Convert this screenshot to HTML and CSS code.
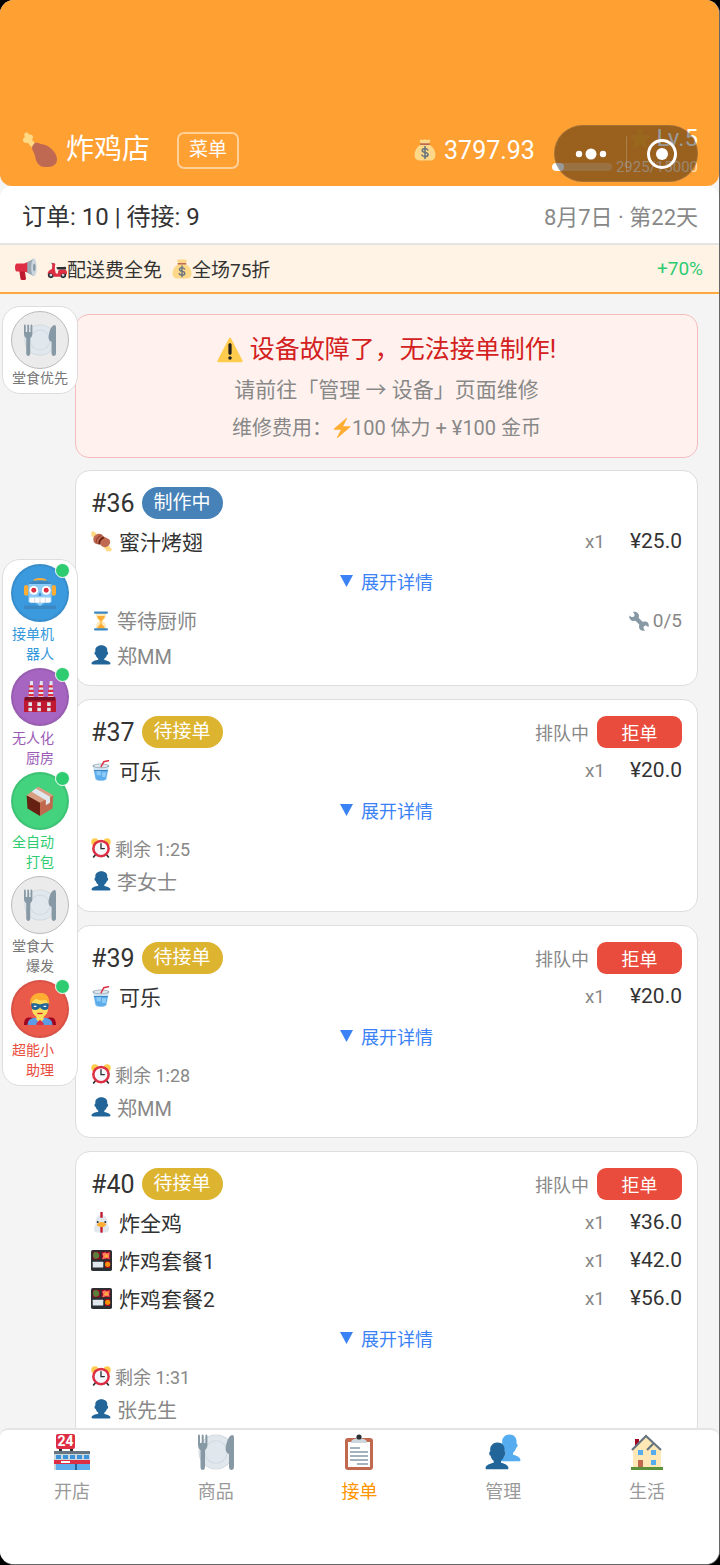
FILE: index.html
```html
<!DOCTYPE html>
<html lang="zh-CN">
<head>
<meta charset="utf-8">
<meta name="viewport" content="width=device-width, initial-scale=1">
<title>炸鸡店</title>
<link rel="stylesheet" href="styles.css">
</head>
<body>
<svg class="sprite" aria-hidden="true">
  <symbol id="i-leg" viewBox="0 0 36 36">
    <path fill="#FFD983" d="M3 1C5 0 7 1 7 3c2-1 4 0 4 2s-1 2-1 3l6 6-4 4-6-7c-2 0-5 0-5-3 0-2 1-2 2-3-1-1-1-3 0-4z"/>
    <path fill="#BF6952" d="M12 12c1-2 4-1 7 0 7 1 12 5 15 11 3 7-1 12-9 12-8 1-11-5-12-11-1-4-3-6-3-8 0-2 1-3 2-4z"/>
  </symbol>
  <symbol id="i-bag" viewBox="0 0 36 36">
    <path fill="#FDD888" d="M12 9C5 12 1 19 1 26c0 7 4 9 10 9h14c6 0 10-2 10-9 0-7-4-14-11-17z"/>
    <path fill="#FDD888" d="M11 1c2 1 4 0 7 0s5 1 7 0c2 0 2 2 1 4l-3 5H13l-3-5c-1-2-1-4 1-4z"/>
    <rect x="10" y="7" width="16" height="3" rx="1.500" fill="#BF6952"/>
    <path fill="none" stroke="#67757F" stroke-width="2.600" stroke-linecap="round" d="M22.500 18c-1-2-3-2.500-4.500-2.500-3 0-4.500 1.500-4.500 3.200 0 4.600 9.500 2.200 9.500 6.800 0 2-2 3.500-5 3.500-2.500 0-4-.8-5-2.800M18 12.500v19.500"/>
  </symbol>
  <symbol id="i-star" viewBox="0 0 36 36">
    <path fill="#FFAC33" d="M27.287 34.627c-.404 0-.806-.124-1.152-.371L18 28.422l-8.135 5.834a1.970 1.970 0 0 1-2.312-.008 1.971 1.971 0 0 1-.721-2.194l3.034-9.792-8.062-5.681a1.980 1.980 0 0 1-.708-2.203 1.978 1.978 0 0 1 1.866-1.363L12.947 13l3.179-9.549a1.976 1.976 0 0 1 3.749 0L23 13l10.036.015a1.975 1.975 0 0 1 1.159 3.566l-8.062 5.681 3.034 9.792a1.970 1.970 0 0 1-.72 2.194 1.957 1.957 0 0 1-1.160.379z"/>
  </symbol>
  <symbol id="i-horn" viewBox="0 0 36 36">
    <path fill="#BE1931" d="M7 21h9l2 13c0 1-1 2-2 2h-5c-1 0-2-1-2-2z"/>
    <path fill="#DD2E44" d="M3 9h12L27 4v22l-12-4H3c-2 0-3-3-3-6.500S1 9 3 9z"/>
    <path fill="#99AAB5" d="M20 7l11-6c2 3 2 25 0 29l-11-6z"/>
    <ellipse cx="31" cy="15.500" rx="4.500" ry="14.500" fill="#CCD6DD"/>
    <ellipse cx="31.500" cy="15.500" rx="2" ry="6" fill="#8899A6"/>
  </symbol>
  <symbol id="i-moto" viewBox="0 0 36 36">
    <path fill="none" stroke="#66757F" stroke-width="2" d="M7 29L12 9 8 7"/>
    <circle cx="7" cy="29" r="5.500" fill="#292F33"/><circle cx="29" cy="29" r="5.500" fill="#292F33"/>
    <circle cx="7" cy="29" r="2.500" fill="#CCD6DD"/><circle cx="29" cy="29" r="2.500" fill="#CCD6DD"/>
    <path fill="#DD2E44" d="M10 10c4-1 5 3 4 8l2 8h4c-1-4 1-7 4-7h9c3 2 4 7 2 9-6-4-10-1-11 4H12c-1-5-6-8-11-5 0-5 4-7 8-9z"/>
    <path fill="#292F33" d="M17 15c5-1 11 0 16-1 2 0 2 5 0 5H20c-2 0-3-2-3-4z"/>
    <circle cx="12" cy="10" r="3" fill="#DD2E44"/>
  </symbol>
  <symbol id="i-plate" viewBox="0 0 36 36">
    <circle cx="18" cy="18" r="17.500" fill="#CCD6DD"/><circle cx="18" cy="18" r="16.700" fill="#E1E8ED"/>
    <circle cx="18" cy="18" r="11.500" fill="#CCD6DD"/><circle cx="18" cy="18" r="10.700" fill="#E1E8ED"/>
    <path fill="#8899A6" d="M0 2c0-2 2-2 2 0v7h1.700V2c0-2 2-2 2 0v7h1.700V2c0-2 2-2 2 0v9c0 3-1.400 4-2.400 5v17c0 4-4.500 4-4.500 0V16C1.300 15 0 14 0 11z"/>
    <path fill="#8899A6" d="M34 1c2 0 2 2 2 4v28c0 4-5 4-5 0V20c-3-1-4-4-3-8 1-6 3-10 6-11z"/>
  </symbol>
  <symbol id="i-warn" viewBox="0 0 36 36">
    <path fill="#FFCC4D" d="M2.653 35C.811 35-.001 33.662.847 32.027L16.456 1.972c.849-1.635 2.238-1.635 3.087 0l15.609 30.056c.85 1.634.037 2.972-1.805 2.972H2.653z"/>
    <path fill="#231F20" d="M15.583 28.953a2.418 2.418 0 0 1 4.837 0 2.418 2.418 0 0 1-4.837 0zm.186-18.293c0-1.302.961-2.108 2.232-2.108 1.241 0 2.233.837 2.233 2.108v11.938c0 1.271-.992 2.108-2.233 2.108-1.271 0-2.232-.807-2.232-2.108z"/>
  </symbol>
  <symbol id="i-bolt" viewBox="0 0 36 36">
    <path fill="#FFAC33" d="M32.938 15.651C32.792 15.260 32.418 15 32 15H19.925L26.890 1.458c.219-.426.106-.947-.271-1.243C26.437.071 26.218 0 26 0c-.233 0-.466.082-.653.243L18 6.588 3.347 19.243c-.316.273-.43.714-.284 1.105S3.582 21 4 21h12.075L9.110 34.542c-.219.426-.106.947.271 1.243.182.144.401.215.619.215.233 0 .466-.082.653-.243L18 29.412l14.653-12.655c.317-.273.43-.714.285-1.106z"/>
  </symbol>
  <symbol id="i-meat" viewBox="0 0 36 36">
    <path fill="#FFD983" d="M2 1c2-1 4 0 4 2 3-1 4 1 3 3l20 20c2-1 5 0 4 3 2 0 3 2 2 4s-3 3-5 1c-1 2-4 2-4-1L4 10C1 10-1 8 1 5 0 4 0 2 2 1z"/>
    <path fill="#BF6952" d="M4 14c0-5 6-10 11-9 3 0 5 1 6 4l10 5c3 3 2 7 0 10-3 3-6 5-10 3-3-1-5-3-6-5-4 1-6 1-8-1-2-1-3-4-3-7z"/>
    <path fill="none" stroke="#662113" stroke-width="3" d="M14 23c0-5 3-10 8-12"/>
    <path fill="none" stroke="#9A4032" stroke-width="2" d="M9 20c-1-5 3-11 8-12"/>
  </symbol>
  <symbol id="i-glass" viewBox="0 0 36 36">
    <path fill="#FFE8B6" d="M9 4h18c0 8-2 11-6 14 4 3 6 6 6 14H9c0-8 2-11 6-14C11 15 9 12 9 4z"/>
    <path fill="#FFAC33" d="M11 9h14c-1 5-4 6-6 9v4c1 5 5 4 6 10H11c1-6 5-5 6-10v-4c-2-3-5-4-6-9z"/>
    <path fill="#3B88C3" d="M7 1h22c2 0 2 4 0 4H7C5 5 5 1 7 1zm0 30h22c2 0 2 4 0 4H7c-2 0-2-4 0-4z"/>
  </symbol>
  <symbol id="i-user" viewBox="0 0 36 36">
    <path fill="currentColor" d="M24 26.799v-2.566c2-1.348 4.080-3.779 4.703-6.896.186.103.206.17.413.17.991 0 1.709-1.287 1.709-2.873 0-1.562-.823-2.827-1.794-2.865.187-.674.293-1.577.293-2.735C29.324 5.168 26 .527 18.541.527c-6.629 0-10.777 4.641-10.777 8.507 0 1.123.069 2.043.188 2.755-.911.137-1.629 1.352-1.629 2.845 0 1.587.804 2.873 1.796 2.873.206 0 .025-.067.209-.17C8.952 20.453 11 22.885 13 24.232v2.414c-5 .645-12 3.437-12 6.230v1.061C1 35 2.076 35 3.137 35h29.725C33.924 35 35 35 35 33.938v-1.061c0-2.615-6-5.225-11-6.078z"/>
  </symbol>
  <symbol id="i-users" viewBox="0 0 36 36">
    <svg x="12" y="0" width="24" height="28" viewBox="0 0 36 36" preserveAspectRatio="none" color="#55ACEE"><use href="#i-user"/></svg>
    <svg x="0" y="8" width="24" height="28" viewBox="0 0 36 36" preserveAspectRatio="none" color="#226699"><use href="#i-user"/></svg>
  </symbol>
  <symbol id="i-wrench" viewBox="0 0 36 36">
    <path fill="#8899A6" d="M1 8c1 1 3 3 5 3s4-2 4-4-2-4-3-5c5-2 11 2 11 7 0 2-1 3 0 4l6 6c1 1 3 0 5 0 5 0 8 5 6 10-1-1-3-3-5-3s-4 2-4 4 2 4 3 5c-5 2-11-1-11-6 0-3 1-4 0-5l-6-6c-1-1-2 0-4 0-5 0-9-5-7-10z"/>
  </symbol>
  <symbol id="i-cup" viewBox="0 0 36 36">
    <path fill="#D4E7F5" d="M3 10h28l-4 23c0 2-4 3-10 3s-10-1-10-3z"/>
    <path fill="#5DADEC" d="M5 17h24l-3 15c-1 2-4 3-9 3s-8-1-9-3z"/>
    <path fill="#8CCAF7" d="M9 19h8v7h-7zm10 2h7l-1 8h-6z"/>
    <path fill="#3B88C3" d="M5 17h24v2H5z"/>
    <ellipse cx="17" cy="10" rx="14.500" ry="4" fill="#99AAB5"/><ellipse cx="17" cy="10" rx="12" ry="2.600" fill="#E1E8ED"/>
    <path fill="none" stroke="#DD2E44" stroke-width="2.600" d="M17 12l5-9 9-2"/>
  </symbol>
  <symbol id="i-clock" viewBox="0 0 36 36">
    <circle cx="7" cy="7" r="6.500" fill="#FFCC4D"/><circle cx="29" cy="7" r="6.500" fill="#FFCC4D"/>
    <path stroke="#292F33" stroke-width="3" d="M8 30l-4 5M28 30l4 5"/>
    <circle cx="18" cy="19" r="16" fill="#DD2E44"/><circle cx="18" cy="19" r="11.500" fill="#F5F8FA"/>
    <path fill="none" stroke="#292F33" stroke-width="2.400" stroke-linecap="round" d="M18 10v9h6"/>
  </symbol>
  <symbol id="i-hen" viewBox="0 0 36 36">
    <path fill="#E1E8ED" d="M18 5c-8 0-10 6-10 13 0 4-3 8-3 12 0 5 6 6 10 5l3-10 3 10c4 1 10 0 10-5 0-4-3-8-3-12 0-7-2-13-10-13z"/>
    <path fill="#BE1931" d="M16 0h4v10h-4zM16 24h4v11c-1 1-3 1-4 0z"/>
    <path fill="#FFAC33" d="M18 17c4 0 8 3 8 5s-5 4-8 4-8-2-8-4 4-5 8-5z"/>
    <circle cx="11.500" cy="17" r="1.700" fill="#292F33"/><circle cx="24.500" cy="17" r="1.700" fill="#292F33"/>
  </symbol>
  <symbol id="i-bento" viewBox="0 0 36 36">
    <rect width="36" height="36" rx="3" fill="#292F33"/>
    <path fill="#A0041E" d="M3 3h12v13H3zm15 0h15v13H18zM24 19h9v12h-9z"/>
    <path fill="#5C7F3B" d="M4 5c4-3 9-1 10 3s-2 7-6 7-5-5-4-10z"/>
    <path fill="#FF7862" d="M19 6l5-2 3 2 5-2-1 7 1 4-6-1-7 2 2-5z"/><path fill="#FFAC33" d="M22 11l5-5 3 6-4 1z"/>
    <rect x="3" y="20" width="18" height="10" rx="1" fill="#E1E8ED"/><circle cx="28.500" cy="24.500" r="4.500" fill="#F4900C"/>
  </symbol>
  <symbol id="i-robot" viewBox="0 0 36 36">
    <path fill="#FFAC33" d="M10 5c1-5 15-5 16 0v4H10z"/>
    <rect x="0" y="9" width="5" height="12" rx="2.500" fill="#FFAC33"/><rect x="31" y="9" width="5" height="12" rx="2.500" fill="#FFAC33"/>
    <path fill="#8CCAF7" d="M5 6c6-3 20-3 26 0v22H5z"/>
    <path fill="#3B88C3" d="M5 6c6-3 20-3 26 0v2H5zM0 32h36v4H0z"/>
    <path fill="#8CCAF7" d="M13 29h10l-5 4z"/>
    <circle cx="11" cy="15" r="5" fill="#fff"/><circle cx="25" cy="15" r="5" fill="#fff"/>
    <circle cx="11" cy="15" r="2.800" fill="#DD2E44"/><circle cx="25" cy="15" r="2.800" fill="#DD2E44"/>
    <path fill="#3B88C3" d="M16 21l2-4 2 4z"/><rect x="6" y="23" width="24" height="6" rx="1.500" fill="#fff"/>
    <path stroke="#CCD6DD" d="M12 23v6M18 23v6M24 23v6"/>
  </symbol>
  <symbol id="i-factory" viewBox="0 0 36 36">
    <path fill="#E1E8ED" d="M7 0h3l1 18H5zM18 0h3l1 18h-6zM29 0h3l1 18h-6z"/>
    <path stroke="#DD2E44" stroke-width="2.500" d="M5.500 6h5M5 11h6M5 16h6M16.500 6h5M16 11h6M16 16h6M27.500 6h5M27 11h6M27 16h6"/>
    <path fill="#BE1931" d="M1 18h34l1 3v14H0V21z"/><path fill="#7A1025" d="M1 18h34v4H1z"/>
    <path fill="#E1E8ED" d="M5 24h4v4H5zm10 0h4v4h-4zm11 0h4v4h-4zM5 30h4v4H5zm10 0h4v4h-4zm11 0h4v4h-4z"/>
  </symbol>
  <symbol id="i-box" viewBox="0 0 36 36">
    <path fill="#662113" d="M2 11l16 8v17L3 27z"/><path fill="#C1694F" d="M18 19l16-8-1 16-15 9z"/>
    <path fill="#D99E82" d="M2 11L16 1l18 10-16 9z"/><path fill="#E1E8ED" d="M8 7l5-4 17 10v7l-5 3v-6z"/>
  </symbol>
  <symbol id="i-hero" viewBox="0 0 36 36">
    <path fill="#A0041E" d="M0 36c0-8 4-9 9-8h18c5-1 9 0 9 8z"/>
    <path fill="#5C9BE6" d="M4 36c0-6 4-8 9-8h10c5 0 9 2 9 8z"/>
    <path fill="#FFDC5D" d="M9 9c0-5 18-5 18 0v9c0 5-3 7-5 9v3l-4 3-4-3v-3c-2-2-5-4-5-9z"/>
    <path fill="#FFAC33" d="M7 14C6 6 9 1 17 0c8-1 13 5 11 14l-3-6c-6 1-9 0-12-2-1 3-3 3-4 4z"/>
    <path fill="#226699" d="M8 12c4-1 7 0 10 1 3-1 6-2 10-1l-1 6c-4 2-7 1-9-2-2 3-5 4-9 2z"/>
    <path stroke="#fff" stroke-width="1.500" d="M11 15h3M22 15h3"/><path stroke="#DF1F32" stroke-width="1.500" d="M15 23h6"/>
    <path fill="#DD2E44" d="M14 34l4-4 4 4v2h-8z"/>
  </symbol>
  <symbol id="i-clip" viewBox="0 0 36 36">
    <rect x="4" y="4" width="28" height="32" rx="3" fill="#C1694F"/><path fill="#fff" d="M7 8h22v25H7z"/>
    <path fill="#CCD6DD" d="M10 9c0-3 2-4 4-4s2-3 4-3 2 3 4 3 4 1 4 4z"/><circle cx="18" cy="3" r="2.600" fill="#292F33"/>
    <path stroke="#8899A6" stroke-width="1.600" d="M9 14h10M9 18h18M9 22h18M9 26h18M16 30h11"/>
  </symbol>
  <symbol id="i-house" viewBox="0 0 36 36">
    <path fill="#A0041E" d="M6 5h4v10H6z"/><path fill="#5C913B" d="M2 33h32v3H2z"/>
    <path fill="#FFE8B6" d="M4 16L17 3l15 13v17H4z"/>
    <path fill="none" stroke="#66757F" stroke-width="2.200" d="M3 16L17 2l15 14M18 16l7-7"/>
    <path fill="#55ACEE" d="M9 16h5v5H9zm13 0h5v5h-5zm0 10h5v5h-5z"/><path fill="#C1694F" d="M9 26h5v7H9z"/>
  </symbol>
</svg>

<div class="app">
  <header class="header">
    <svg class="icon-36" aria-hidden="true"><use href="#i-leg"/></svg>
    <h1 class="shop">炸鸡店</h1>
    <button class="menu-btn" type="button">菜单</button>
    <div class="money"><svg class="icon-22" aria-hidden="true"><use href="#i-bag"/></svg><span>3797.93</span></div>
    <div class="level">
      <div class="level-name"><svg class="icon-22" aria-hidden="true"><use href="#i-star"/></svg><span>Lv.5</span></div>
      <div class="level-xp"><div class="bar"><div class="bar-fill" style="width:19.5%"></div></div><span>2925/15000</span></div>
    </div>
    <div class="capsule">
      <button type="button" aria-label="更多"><svg width="32" height="12" viewBox="0 0 32 12"><g fill="#fff"><circle cx="4" cy="6" r="3.200"/><circle cx="16" cy="6" r="5.500"/><circle cx="28" cy="6" r="3.200"/></g></svg></button>
      <button type="button" aria-label="关闭"><svg width="32" height="32" viewBox="0 0 32 32"><circle cx="16" cy="16" r="13.500" fill="none" stroke="#fff" stroke-width="3"/><circle cx="16" cy="16" r="6" fill="#fff"/></svg></button>
    </div>
  </header>

  <div class="status"><span>订单: 10 | 待接: 9</span><span class="date">8月7日 · 第22天</span></div>

  <div class="promo">
    <svg class="icon-22" aria-hidden="true"><use href="#i-horn"/></svg>
    <span class="deal"><svg class="icon-20" aria-hidden="true"><use href="#i-moto"/></svg>配送费全免</span>
    <span class="deal"><svg class="icon-20" aria-hidden="true"><use href="#i-bag"/></svg>全场75折</span>
    <span class="boost">+70%</span>
  </div>

  <main class="main">
    <section class="alert">
      <h2><svg class="icon-26" aria-hidden="true"><use href="#i-warn"/></svg>设备故障了，无法接单制作!</h2>
      <p class="alert-go">请前往「管理 → 设备」页面维修</p>
      <p class="alert-cost">维修费用：<svg class="icon-20" aria-hidden="true"><use href="#i-bolt"/></svg>100 体力 + ¥100 金币</p>
    </section>

    <article class="card">
      <div class="card-head"><h3>#36</h3><span class="pill pill-blue">制作中</span></div>
      <div class="item"><svg class="icon-21" aria-hidden="true"><use href="#i-meat"/></svg><span>蜜汁烤翅</span><span class="qty">x1</span><span class="price">¥25.0</span></div>
      <button class="expand" type="button"><i class="tri"></i>展开详情</button>
      <div class="cook"><svg class="icon-20" aria-hidden="true"><use href="#i-glass"/></svg><span>等待厨师</span><span class="progress"><svg class="icon-20" aria-hidden="true"><use href="#i-wrench"/></svg>0/5</span></div>
      <div class="customer"><svg class="icon-20" aria-hidden="true"><use href="#i-user"/></svg><span>郑MM</span></div>
    </article>

    <article class="card">
      <div class="card-head"><h3>#37</h3><span class="pill">待接单</span><span class="queue">排队中</span><button class="reject" type="button">拒单</button></div>
      <div class="item"><svg class="icon-21" aria-hidden="true"><use href="#i-cup"/></svg><span>可乐</span><span class="qty">x1</span><span class="price">¥20.0</span></div>
      <button class="expand" type="button"><i class="tri"></i>展开详情</button>
      <div class="timer"><svg class="icon-20" aria-hidden="true"><use href="#i-clock"/></svg><span>剩余 1:25</span></div>
      <div class="customer"><svg class="icon-20" aria-hidden="true"><use href="#i-user"/></svg><span>李女士</span></div>
    </article>

    <article class="card">
      <div class="card-head"><h3>#39</h3><span class="pill">待接单</span><span class="queue">排队中</span><button class="reject" type="button">拒单</button></div>
      <div class="item"><svg class="icon-21" aria-hidden="true"><use href="#i-cup"/></svg><span>可乐</span><span class="qty">x1</span><span class="price">¥20.0</span></div>
      <button class="expand" type="button"><i class="tri"></i>展开详情</button>
      <div class="timer"><svg class="icon-20" aria-hidden="true"><use href="#i-clock"/></svg><span>剩余 1:28</span></div>
      <div class="customer"><svg class="icon-20" aria-hidden="true"><use href="#i-user"/></svg><span>郑MM</span></div>
    </article>

    <article class="card">
      <div class="card-head"><h3>#40</h3><span class="pill">待接单</span><span class="queue">排队中</span><button class="reject" type="button">拒单</button></div>
      <div class="item"><svg class="icon-21" aria-hidden="true"><use href="#i-hen"/></svg><span>炸全鸡</span><span class="qty">x1</span><span class="price">¥36.0</span></div>
      <div class="item"><svg class="icon-21" aria-hidden="true"><use href="#i-bento"/></svg><span>炸鸡套餐1</span><span class="qty">x1</span><span class="price">¥42.0</span></div>
      <div class="item"><svg class="icon-21" aria-hidden="true"><use href="#i-bento"/></svg><span>炸鸡套餐2</span><span class="qty">x1</span><span class="price">¥56.0</span></div>
      <button class="expand" type="button"><i class="tri"></i>展开详情</button>
      <div class="timer"><svg class="icon-20" aria-hidden="true"><use href="#i-clock"/></svg><span>剩余 1:31</span></div>
      <div class="customer"><svg class="icon-20" aria-hidden="true"><use href="#i-user"/></svg><span>张先生</span></div>
    </article>

    <aside class="float float-top">
      <button class="tool tool-gray" type="button"><span class="disc"><svg class="icon-32" aria-hidden="true"><use href="#i-plate"/></svg></span><span class="label label-line">堂食优先</span></button>
    </aside>
    <aside class="float float-tools">
      <button class="tool tool-blue" type="button"><span class="disc"><svg class="icon-32" aria-hidden="true"><use href="#i-robot"/></svg><i class="dot"></i></span><span class="label">接单机器人</span></button>
      <button class="tool tool-purple" type="button"><span class="disc"><svg class="icon-32" aria-hidden="true"><use href="#i-factory"/></svg><i class="dot"></i></span><span class="label">无人化厨房</span></button>
      <button class="tool tool-green" type="button"><span class="disc"><svg class="icon-30" aria-hidden="true"><use href="#i-box"/></svg><i class="dot"></i></span><span class="label">全自动打包</span></button>
      <button class="tool tool-gray" type="button"><span class="disc"><svg class="icon-32" aria-hidden="true"><use href="#i-plate"/></svg></span><span class="label">堂食大爆发</span></button>
      <button class="tool tool-red" type="button"><span class="disc"><svg class="icon-32" aria-hidden="true"><use href="#i-hero"/></svg><i class="dot"></i></span><span class="label">超能小助理</span></button>
    </aside>
  </main>

  <nav class="tabs">
    <a href="#shop">
      <svg class="icon-36" viewBox="0 0 36 36" aria-hidden="true">
        <path fill="#292F33" d="M5 13h3v5H5zm11 0h3v5h-3z"/>
        <rect x="2" y="0" width="19" height="15" rx="2" fill="#DD2E44"/>
        <text x="11.500" y="12" font-size="14" font-weight="700" fill="#fff" text-anchor="middle">24</text>
        <path fill="#CCD6DD" d="M0 17h36v19H0z"/><path fill="#66757F" d="M0 17h36v3H0z"/>
        <path fill="#3B94D9" d="M2 21h5v4H2zm7 0h5v4H9zm7 0h5v4h-5zm7 0h5v4h-5zm7 0h5v4h-5z"/>
        <path fill="#DD2E44" d="M0 26h36v4H0z"/><path fill="#fff" d="M7 27h9v2H7z"/>
        <path fill="#5DADEC" d="M2 30h19v6H2zm21 0h13v6H23z"/><path fill="#226699" d="M21 30h2v6h-2z"/>
      </svg>开店</a>
    <a href="#goods"><svg class="icon-36" aria-hidden="true"><use href="#i-plate"/></svg>商品</a>
    <a href="#orders" class="active" aria-current="page"><svg class="icon-36" aria-hidden="true"><use href="#i-clip"/></svg>接单</a>
    <a href="#manage"><svg class="icon-36" aria-hidden="true"><use href="#i-users"/></svg>管理</a>
    <a href="#life"><svg class="icon-36" aria-hidden="true"><use href="#i-house"/></svg>生活</a>
  </nav>
</div>
</body>
</html>
```
FILE: styles.css
```css
* { box-sizing: border-box; }
body {
  margin: 0;
  background: #000;
  font-family: Roboto, "Noto Sans CJK SC", sans-serif;
  color: #333;
}
h1, h2, h3, p { margin: 0; font-weight: 400; }
button { font-family: inherit; border: 0; padding: 0; background: none; cursor: pointer; }
a { color: inherit; text-decoration: none; }
svg { display: block; flex: none; }
.sprite { position: absolute; width: 0; height: 0; }
.icon-20 { width: 20px; height: 20px; }
.icon-21 { width: 21px; height: 21px; }
.icon-22 { width: 22px; height: 22px; }
.icon-26 { width: 26px; height: 26px; }
.icon-30 { width: 30px; height: 30px; }
.icon-32 { width: 32px; height: 32px; }
.icon-36 { width: 36px; height: 36px; }

.app {
  display: flex;
  flex-direction: column;
  height: 100vh;
  border-right: 1px solid #666;
  border-bottom: 1px solid #666;
  border-radius: 14px;
  overflow: hidden;
  background: #f4f4f4;
}

/* header */
.header {
  position: relative;
  display: flex;
  align-items: center;
  padding: 124px 21px 10px 22px;
  border-radius: 0 0 12px 12px;
  background: #ffa033;
  color: #fff;
}
.shop { margin-left: 8px; font-size: 28px; line-height: 40px; }
.menu-btn {
  margin-left: 27px;
  padding: 0 10px;
  height: 37px;
  border: 2px solid rgba(255, 255, 255, .5);
  border-radius: 7px;
  color: #fff;
  font-size: 19px;
  line-height: 32px;
}
.money { display: flex; align-items: center; gap: 8px; margin-left: auto; font-size: 25px; }
.level { display: flex; flex-direction: column; gap: 6px; margin-left: 17px; }
.level-name { display: flex; justify-content: flex-end; align-items: center; gap: 5px; font-size: 24px; line-height: 28px; }
.level-xp { display: flex; align-items: center; gap: 4px; font-size: 15px; line-height: 18px; color: rgba(255, 255, 255, .7); }
.bar { width: 60px; height: 8px; border-radius: 4px; overflow: hidden; background: rgba(255, 255, 255, .3); }
.bar-fill { height: 100%; border-radius: 4px; background: #fff; }
.capsule {
  position: absolute;
  right: 21px;
  top: 125px;
  display: grid;
  grid-template-columns: 1fr 1fr;
  width: 144px;
  height: 57px;
  border-radius: 29px;
  border: 1px solid rgba(255, 255, 255, .1);
  background: rgba(0, 0, 0, .4);
}
.capsule button { display: grid; place-items: center; }
.capsule button + button {
  background: linear-gradient(rgba(255, 255, 255, .2), rgba(255, 255, 255, .2)) left center / 1px 36px no-repeat;
}

/* day and promotion strips */
.status {
  display: flex;
  align-items: center;
  justify-content: space-between;
  height: 59px;
  padding: 0 21px 0 22px;
  border-bottom: 2px solid #e4e4e4;
  border-radius: 12px 12px 0 0;
  background: #fff;
  font-size: 24px;
}
.date { color: #888; font-size: 22px; }
.promo {
  display: flex;
  align-items: center;
  gap: 10px;
  height: 49px;
  padding: 0 16px 0 15px;
  border-bottom: 2px solid #ffa940;
  background: #fff3e5;
  font-size: 19px;
}
.deal { display: flex; align-items: center; }
.boost { margin-left: auto; color: #2ecc71; }

/* order list */
.main {
  position: relative;
  flex: 1;
  min-height: 0;
  overflow: hidden;
  padding: 20px 21px 0 75px;
}
.alert {
  padding: 17px 16px 13px;
  border: 1px solid #f3bdbd;
  border-radius: 14px;
  background: #fff2ee;
  text-align: center;
}
.alert h2 { display: flex; align-items: center; justify-content: center; gap: 7px; font-size: 25px; line-height: 36px; color: #d32020; }
.alert p { color: #888; }
.alert-go { font-size: 21px; line-height: 44px; }
.alert-cost { display: flex; align-items: center; justify-content: center; font-size: 20px; line-height: 32px; white-space: pre; }
.card {
  margin-top: 13px;
  padding: 16px 15px 17px;
  border: 1px solid #ddd;
  border-radius: 15px;
  background: #fff;
}
.alert + .card { margin-top: 12px; }
.card-head { display: flex; align-items: center; height: 32px; margin-bottom: 3px; }
.card-head h3 { font-size: 25px; }
.pill {
  margin-left: 7px;
  padding: 0 12px;
  border-radius: 16px;
  background: #ddb430;
  color: #fff;
  font-size: 19px;
  line-height: 32px;
}
.pill-blue { background: #4682b8; }
.queue { margin-left: auto; color: #888; font-size: 18px; }
.reject {
  width: 85px;
  height: 32px;
  margin-left: 8px;
  border-radius: 9px;
  background: #e94b3c;
  color: #fff;
  font-size: 18px;
}
.item { display: flex; align-items: center; gap: 7px; height: 38px; font-size: 21px; }
.qty { margin-left: auto; color: #888; font-size: 19px; }
.price { margin-left: 18px; }
.expand {
  display: flex;
  align-items: center;
  justify-content: center;
  gap: 8px;
  width: 100%;
  height: 42px;
  color: #3b82f6;
  font-size: 18px;
}
.tri { width: 13px; height: 12px; background: currentColor; clip-path: polygon(0 0, 100% 0, 50% 100%); }
.cook, .customer, .timer { display: flex; align-items: center; color: #888; }
.cook { gap: 6px; height: 37px; font-size: 20px; }
.progress { display: flex; align-items: center; gap: 4px; margin-left: auto; font-size: 19px; }
.timer { gap: 4px; height: 34px; font-size: 18px; }
.customer { gap: 6px; height: 26px; margin-top: 3px; font-size: 20px; }
.customer svg { color: #226699; }

/* floating tool panels over the list */
.float {
  position: absolute;
  left: 2px;
  width: 76px;
  padding: 4px 8px 5px;
  border: 1px solid #ddd;
  border-radius: 18px;
  background: #fff;
}
.float-top { top: 12px; }
.float-tools { top: 265px; display: grid; gap: 4px; }
.tool { display: block; width: 58px; }
.disc {
  position: relative;
  display: grid;
  place-items: center;
  width: 58px;
  height: 58px;
  border: 2px solid rgba(0, 0, 0, .08);
  border-radius: 50%;
}
.label { display: block; width: 43px; margin-top: 2px; font-size: 14px; line-height: 20px; text-align: right; }
.label-line { width: 100%; margin-top: 0; line-height: 19px; text-align: center; }
.dot {
  position: absolute;
  top: -3px;
  right: -3px;
  width: 15px;
  height: 15px;
  border: 1px solid #fff;
  border-radius: 50%;
  background: #2ecc71;
}
.tool-gray { color: #777; }
.tool-gray .disc { background: #ebebeb; border: 1px solid #bbb; }
.tool-blue { color: #3498db; }
.tool-blue .disc { background: #3b9ade; }
.tool-purple { color: #9b59b6; }
.tool-purple .disc { background: #a565c0; }
.tool-green { color: #2ecc71; }
.tool-green .disc { background: #43d37f; }
.tool-red { color: #e74c3c; }
.tool-red .disc { background: #ea5a4b; }

/* bottom tabs */
.tabs {
  display: grid;
  grid-template-columns: repeat(5, 1fr);
  height: 136px;
  padding-top: 4px;
  border-top: 2px solid #e4e4e4;
  border-radius: 8px 8px 0 0;
  background: #fff;
  color: #999;
}
.tabs a { display: flex; flex-direction: column; align-items: center; gap: 9px; font-size: 18px; line-height: 26px; }
.tabs .active { color: #ff9500; }
```
